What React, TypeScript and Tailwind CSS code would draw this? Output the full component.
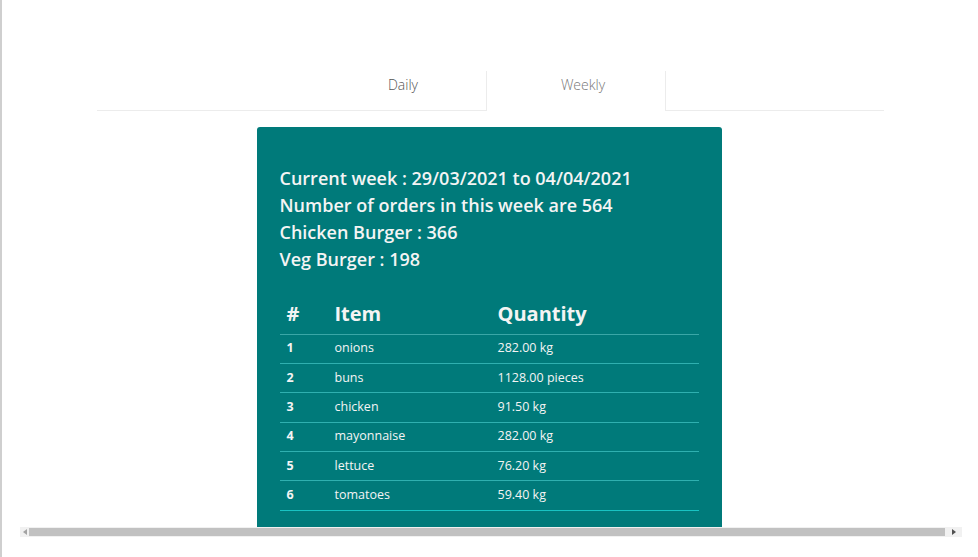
type Row = { id: number; item: string; qty: string };

const rows: Row[] = [
  { id: 1, item: "onions", qty: "282.00 kg" },
  { id: 2, item: "buns", qty: "1128.00 pieces" },
  { id: 3, item: "chicken", qty: "91.50 kg" },
  { id: 4, item: "mayonnaise", qty: "282.00 kg" },
  { id: 5, item: "lettuce", qty: "76.20 kg" },
  { id: 6, item: "tomatoes", qty: "59.40 kg" },
];

const stats = [
  "Current week : 29/03/2021 to 04/04/2021",
  "Number of orders in this week are 564",
  "Chicken Burger : 366",
  "Veg Burger : 198",
];

const Tabs = () => (
  <div className="ml-[95px] mt-[71px] flex h-[40px] w-[787px] border-b border-[#ececec]">
    <div className="ml-[209px] w-[180px] pl-[14px] pt-[3px] text-center text-[14px] font-light text-[#555]">
      Daily
    </div>
    <div className="relative -mb-px w-[180px] border-x border-[#ececec] bg-white pl-[14px] pt-[3px] text-center text-[14px] font-light text-[#777]">
      Weekly
    </div>
  </div>
);

const Scrollbar = () => (
  <div className="absolute left-[18px] right-[16px] top-[527px] flex h-[10px] items-center bg-[#f1f1f1]">
    <span className="flex w-[9px] items-center justify-center text-[#a3a3a3]">
      <svg width="4" height="6" viewBox="0 0 4 6">
        <path d="M4 0 L0 3 L4 6 Z" fill="currentColor" />
      </svg>
    </span>
    <div className="h-[8px] flex-1 bg-[#c1c1c1]" />
    <span className="flex w-[17px] items-center justify-center text-[#505050]">
      <svg width="4" height="6" viewBox="0 0 4 6">
        <path d="M0 0 L4 3 L0 6 Z" fill="currentColor" />
      </svg>
    </span>
  </div>
);

export default function App() {
  return (
    <div
      className="relative h-[557px] w-[978px] overflow-hidden border-l-2 border-[#cfcfcf] bg-white"
      style={{ fontFamily: '"Open Sans", "Noto Sans", sans-serif' }}
    >
      <Tabs />

      <div className="mx-auto mt-[16px] w-[465px] translate-x-[-1px] rounded-t-[3px] bg-[#007a7a] px-[23px] pb-16 pt-[38px] text-[#f4f4f4]">
        <div className="text-[18px] font-semibold leading-[27px]">
          {stats.map((s) => (
            <p key={s}>{s}</p>
          ))}
        </div>

        <table className="mt-[21px] w-full table-fixed border-collapse text-left">
          <thead>
            <tr className="h-[40px] border-b border-[#3aa7a7]">
              <th className="w-[55px] pl-[7px] text-[20px] font-bold">#</th>
              <th className="w-[163px] text-[20px] font-bold">Item</th>
              <th className="text-[20px] font-bold">Quantity</th>
            </tr>
          </thead>
          <tbody className="text-[12.5px]">
            {rows.map((r, i) => (
              <tr
                key={r.id}
                className={
                  i === rows.length - 1
                    ? "h-[29.4px] border-b border-[#19c3c3]"
                    : "h-[29.4px] border-b border-[#2fb0b0]"
                }
              >
                <td className="pl-[7px] font-bold">{r.id}</td>
                <td>{r.item}</td>
                <td>{r.qty}</td>
              </tr>
            ))}
          </tbody>
        </table>
      </div>

      <div className="absolute bottom-0 left-0 right-0 h-[20px] bg-white" />
      <Scrollbar />
    </div>
  );
}
